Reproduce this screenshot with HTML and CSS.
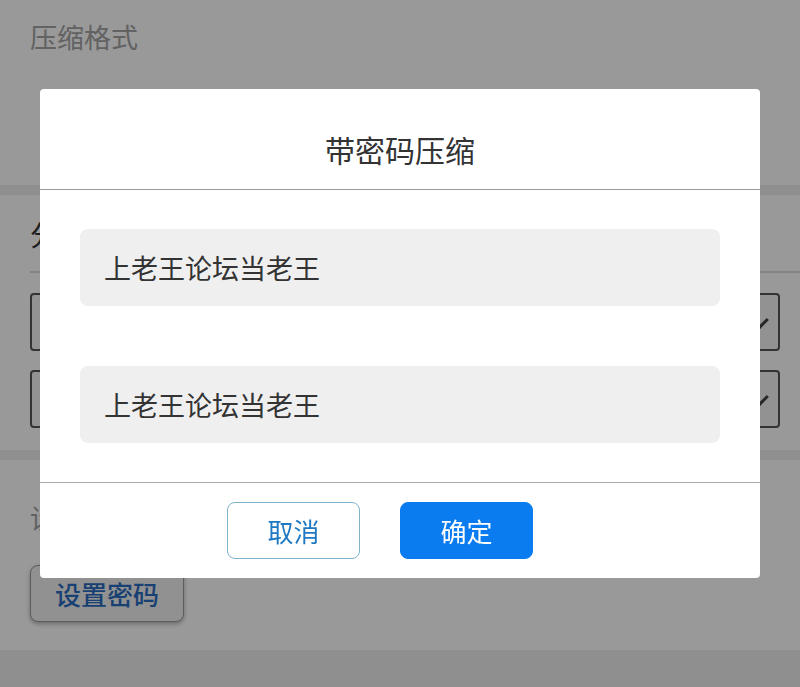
FILE: index.html
```html
<!DOCTYPE html>
<html lang="zh-CN">

<head>
  <meta charset="UTF-8" />
  <meta name="viewport" content="width=device-width, initial-scale=1.0" />
  <title>带密码压缩</title>
  <link rel="stylesheet" href="styles.css">
</head>

<body>

  <div class="page">
    <div class="section first">
      <p class="label">压缩格式</p>
    </div>
    <div class="section second">
      <p class="title">分卷压缩</p>
      <div class="rule"></div>
      <div class="select"><span class="chev"></span></div>
      <div class="select"><span class="chev"></span></div>
    </div>
    <div class="section third">
      <p class="label">设置密码</p>
      <button class="setpass">设置密码</button>
    </div>
  </div>

  <div class="mask">
    <div class="dialog">
      <div class="dialog-head">带密码压缩</div>
      <div class="dialog-body">
        <input type="text" class="field" value="上老王论坛当老王" />
        <input type="text" class="field" value="上老王论坛当老王" />
      </div>
      <div class="dialog-foot">
        <button class="btn cancel">取消</button>
        <button class="btn ok">确定</button>
      </div>
    </div>
  </div>

</body>

</html>
```

FILE: styles.css
```css
* {
  box-sizing: border-box;
}

body {
  margin: 0;
  background-color: #eeeeee;
  font-family: "Noto Sans CJK SC", "Noto Sans", sans-serif;
  overflow: hidden;
}

.page {
  display: flex;
  flex-direction: column;
  gap: 10px;
  height: 687px;
}

.section {
  background-color: #ffffff;
  padding: 0 20px 0 30px;
}

.first {
  height: 185px;
  padding-top: 17px;
}

.label {
  margin: 0;
  font-size: 27px;
  line-height: 40px;
  color: #a3a3a3;
}

.second {
  height: 255px;
  padding-top: 18px;
  padding-right: 20px;
}

.title {
  margin: 0;
  font-size: 28px;
  line-height: 42px;
  color: #333333;
}

.rule {
  height: 2px;
  background-color: #dddddd;
  margin: 16px -20px 20px 0;
}

.select {
  position: relative;
  height: 58px;
  border: 2px solid #555555;
  border-radius: 4px;
  margin-bottom: 19px;
  background-color: #f4f4f4;
}

.chev {
  position: absolute;
  right: 12px;
  top: 18px;
  width: 14px;
  height: 14px;
  border-right: 3px solid #444;
  border-bottom: 3px solid #444;
  transform: rotate(45deg);
}

.third {
  height: 190px;
  padding-top: 38px;
}

.setpass {
  margin-top: 27px;
  width: 154px;
  height: 57px;
  border: 1px solid #999;
  border-radius: 8px;
  background-color: #f2f2f2;
  box-shadow: 0 2px 4px rgba(0, 0, 0, 0.3);
  font-family: inherit;
  font-size: 26px;
  font-weight: 500;
  color: #2a6cc0;
}

.mask {
  position: fixed;
  inset: 0;
  background-color: rgba(0, 0, 0, 0.4);
  display: flex;
  justify-content: center;
  padding-top: 89px;
}

.dialog {
  width: 720px;
  height: 489px;
  background-color: #ffffff;
  border-radius: 4px;
  display: flex;
  flex-direction: column;
}

.dialog-head {
  height: 101px;
  padding-top: 41px;
  text-align: center;
  font-size: 30px;
  line-height: 38px;
  color: #333333;
  border-bottom: 1px solid #9a9a9a;
}

.dialog-body {
  display: flex;
  flex-direction: column;
  gap: 60px;
  padding: 39px 40px;
  border-bottom: 1px solid #aaaaaa;
}

.field {
  height: 77px;
  border: none;
  border-radius: 8px;
  background-color: #efefef;
  padding: 0 24px;
  font-family: inherit;
  font-size: 27px;
  color: #333333;
  outline: none;
}

.dialog-foot {
  display: flex;
  justify-content: center;
  gap: 40px;
  padding: 19px 40px 0 0;
}

.btn {
  width: 133px;
  height: 57px;
  border-radius: 8px;
  font-family: inherit;
  font-size: 26px;
}

.cancel {
  background-color: #ffffff;
  border: 1px solid #7fb3cc;
  color: #1e78c2;
}

.ok {
  background-color: #0a7cef;
  border: 1px solid #0a7cef;
  color: #ffffff;
}
```
